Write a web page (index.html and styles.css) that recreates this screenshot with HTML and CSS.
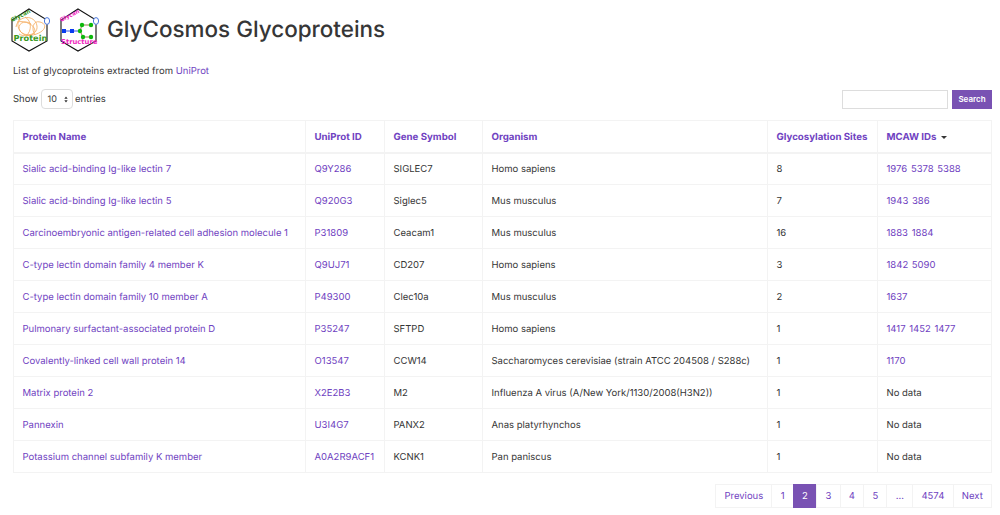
FILE: index.html
```html
<!DOCTYPE html>
<html lang="en">
<head>
<meta charset="utf-8">
<title>GlyCosmos Glycoproteins</title>
<link rel="stylesheet" href="styles.css">
</head>
<body>
<header class="page-head">
  <svg class="logo" viewBox="0 0 40 46" aria-hidden="true">
    <path class="hex" d="M18 2 L36 13 L36 34 L18 44 L1 34 L1 13 Z"/>
    <g class="swirl">
      <path d="M5 20 C7 8 24 7 26 19 C27 29 13 30 9 24 C5 17 14 12 20 17"/>
      <path d="M9 11 C3 20 11 31 22 28 C35 25 37 17 29 15 C22 13 20 22 24 28"/>
      <path d="M14 10 C21 14 21 24 15 29"/>
      <path d="M6 15 C14 13 24 18 24 24 C24 29 12 30 8 27"/>
    </g>
    <ellipse class="node-o" cx="36" cy="14" rx="2.6" ry="3.4"/>
    <text class="lg lg-green" x="1" y="15" transform="rotate(-27 1 15)">Glycan</text>
    <text class="lp lg-green" x="2.5" y="34">Protein</text>
  </svg>
  <svg class="logo" viewBox="0 0 40 46" aria-hidden="true">
    <path class="hex" d="M18 2 L36 13 L36 34 L18 44 L1 34 L1 13 Z"/>
    <path class="bond-blue" d="M4 24 H20"/>
    <path class="bond-brown" d="M20 24 L22 18 H31 M20 24 L23 30 H31"/>
    <rect class="sq" x="2" y="22" width="4" height="4"/>
    <rect class="sq" x="10" y="22" width="4" height="4"/>
    <circle class="dot" cx="20" cy="24" r="2.2"/>
    <circle class="dot" cx="22" cy="18" r="2.2"/>
    <circle class="dot" cx="31" cy="18" r="2.2"/>
    <circle class="dot" cx="23" cy="30" r="2.2"/>
    <circle class="dot" cx="31" cy="30" r="2.2"/>
    <ellipse class="node-o" cx="36" cy="14" rx="2.6" ry="3.4"/>
    <text class="lg lg-pink" x="1" y="15" transform="rotate(-27 1 15)">Glycan</text>
    <text class="ls lg-pink" x="1" y="37">Structure</text>
  </svg>
  <h1>GlyCosmos Glycoproteins</h1>
</header>
<p class="lead">List of glycoproteins extracted from <a href="#">UniProt</a></p>
<div class="controls">
  <label class="length">Show
    <span class="fake-select">10<svg viewBox="0 0 6 10" aria-hidden="true"><path d="M3 0.5 L5.5 4 H0.5 Z M3 9.5 L0.5 6 H5.5 Z"/></svg></span>
    entries</label>
  <div class="search"><input type="text" aria-label="Search"><button type="button">Search</button></div>
</div>
<table>
  <thead>
    <tr>
      <th class="c-name"><a href="#">Protein Name</a></th>
      <th class="c-id"><a href="#">UniProt ID</a></th>
      <th class="c-gene"><a href="#">Gene Symbol</a></th>
      <th class="c-org"><a href="#">Organism</a></th>
      <th class="c-sites"><a href="#">Glycosylation Sites</a></th>
      <th class="c-mcaw"><a href="#">MCAW IDs</a><span class="caret"></span></th>
    </tr>
  </thead>
  <tbody>
    <tr><td><a href="#">Sialic acid-binding Ig-like lectin 7</a></td><td><a href="#">Q9Y286</a></td><td>SIGLEC7</td><td>Homo sapiens</td><td>8</td><td class="ids"><a href="#">1976</a> <a href="#">5378</a> <a href="#">5388</a></td></tr>
    <tr><td><a href="#">Sialic acid-binding Ig-like lectin 5</a></td><td><a href="#">Q920G3</a></td><td>Siglec5</td><td>Mus musculus</td><td>7</td><td class="ids"><a href="#">1943</a> <a href="#">386</a></td></tr>
    <tr><td><a href="#">Carcinoembryonic antigen-related cell adhesion molecule 1</a></td><td><a href="#">P31809</a></td><td>Ceacam1</td><td>Mus musculus</td><td>16</td><td class="ids"><a href="#">1883</a> <a href="#">1884</a></td></tr>
    <tr><td><a href="#">C-type lectin domain family 4 member K</a></td><td><a href="#">Q9UJ71</a></td><td>CD207</td><td>Homo sapiens</td><td>3</td><td class="ids"><a href="#">1842</a> <a href="#">5090</a></td></tr>
    <tr><td><a href="#">C-type lectin domain family 10 member A</a></td><td><a href="#">P49300</a></td><td>Clec10a</td><td>Mus musculus</td><td>2</td><td class="ids"><a href="#">1637</a></td></tr>
    <tr><td><a href="#">Pulmonary surfactant-associated protein D</a></td><td><a href="#">P35247</a></td><td>SFTPD</td><td>Homo sapiens</td><td>1</td><td class="ids"><a href="#">1417</a> <a href="#">1452</a> <a href="#">1477</a></td></tr>
    <tr><td><a href="#">Covalently-linked cell wall protein 14</a></td><td><a href="#">O13547</a></td><td>CCW14</td><td>Saccharomyces cerevisiae (strain ATCC 204508 / S288c)</td><td>1</td><td class="ids"><a href="#">1170</a></td></tr>
    <tr><td><a href="#">Matrix protein 2</a></td><td><a href="#">X2E2B3</a></td><td>M2</td><td>Influenza A virus (A/New York/1130/2008(H3N2))</td><td>1</td><td>No data</td></tr>
    <tr><td><a href="#">Pannexin</a></td><td><a href="#">U3I4G7</a></td><td>PANX2</td><td>Anas platyrhynchos</td><td>1</td><td>No data</td></tr>
    <tr><td><a href="#">Potassium channel subfamily K member</a></td><td><a href="#">A0A2R9ACF1</a></td><td>KCNK1</td><td>Pan paniscus</td><td>1</td><td>No data</td></tr>
  </tbody>
</table>
<nav class="pager">
  <a href="#">Previous</a><a href="#">1</a><a href="#" class="current">2</a><a href="#">3</a><a href="#">4</a><a href="#">5</a><span>…</span><a href="#">4574</a><a href="#">Next</a>
</nav>
</body>
</html>
```
FILE: styles.css
```css
* { box-sizing: border-box; }
html, body { margin: 0; padding: 0; }
body {
  width: 1000px;
  height: 515px;
  overflow: hidden;
  padding: 0 8px 0 13px;
  background: #fff;
  color: #363636;
  font: 9.5px/15px Inter, "Liberation Sans", sans-serif;
  text-rendering: geometricPrecision;
}
a { color: #6f42c1; text-decoration: none; }

.page-head {
  display: flex;
  align-items: center;
  height: 60px;
  margin-left: -2px;
}
.logo { width: 40px; height: 46px; margin-right: 9px; flex: none; overflow: visible; }
.logo + h1 { margin-left: -2px; }
h1 { margin: 0; font-size: 22.45px; line-height: 30px; font-weight: 500; color: #363636; }
.hex { fill: #fff; stroke: #111; stroke-width: 1.1; }
.swirl path { fill: none; stroke: #f5b26b; stroke-width: 0.9; }
.node-o { fill: #fff; stroke: #4a78e0; stroke-width: 1; }
.lg { font: 700 5.6px "DejaVu Sans", sans-serif; }
.lp { font: 700 8.2px "DejaVu Sans", sans-serif; }
.ls { font: 700 6.8px "DejaVu Sans", sans-serif; }
.lg-green { fill: #3a9a1e; }
.lg-pink { fill: #f01fc0; }
.bond-blue { stroke: #1c3fe0; stroke-width: 0.9; fill: none; }
.bond-brown { stroke: #8a6a3a; stroke-width: 0.9; fill: none; }
.sq { fill: #0a3cf0; }
.dot { fill: #0cb80c; }

.lead { margin: 4px 0 0; height: 15px; }
.controls {
  display: flex;
  justify-content: space-between;
  align-items: center;
  height: 20px;
  margin-top: 10px;
}
.length { display: flex; align-items: center; gap: 2.5px; }
.fake-select {
  display: flex;
  align-items: center;
  justify-content: space-between;
  width: 32px;
  height: 20px;
  padding: 0 4px 0 6px;
  border: 1px solid #ddd;
  border-radius: 4px;
  font-size: 9px;
}
.fake-select svg { width: 4px; height: 7px; fill: #333; }
.search { display: flex; gap: 4px; }
.search input {
  width: 106px;
  height: 19px;
  margin: 0;
  padding: 0 4px;
  border: 1px solid #ddd;
  background: #fff;
}
.search button {
  width: 40px;
  height: 19px;
  padding: 0;
  border: 1px solid #7952b3;
  background: #7952b3;
  color: #fff;
  font: 600 8px Inter, sans-serif;
}

table {
  width: 978px;
  margin-top: 11px;
  border-collapse: collapse;
  table-layout: fixed;
}
th, td {
  height: 32px;
  padding: 1px 8.5px 0;
  border: 1px solid #f3f3f3;
  text-align: left;
  white-space: nowrap;
}
th { font-size: 9.7px; font-weight: 700; padding-top: 2px; border-bottom-width: 2px; }
.ids { word-spacing: 1px; }
.c-name { width: 292px; }
.c-id { width: 79px; }
.c-gene { width: 98px; }
.c-org { width: 285px; }
.c-sites { width: 110px; }
.c-mcaw { width: 114px; }
.caret {
  display: inline-block;
  margin-left: 5px;
  vertical-align: 1px;
  border: 3.5px solid transparent;
  border-top-color: #363636;
  border-bottom: 0;
}

.pager {
  display: flex;
  justify-content: flex-end;
  height: 24px;
  margin-top: 11px;
}
.pager a, .pager span {
  display: flex;
  align-items: center;
  justify-content: center;
  padding: 0 8.25px;
  border: 1px solid #f3f3f3;
  margin-left: -1px;
  color: #6f42c1;
}
.pager .current { background: #7952b3; border-color: #7952b3; color: #fff; }
```
